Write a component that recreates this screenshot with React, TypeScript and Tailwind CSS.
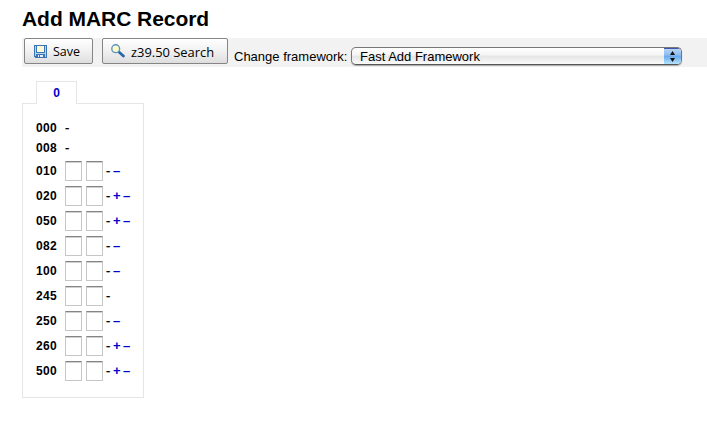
import type { ReactNode } from "react";

type Row = { tag: string; fields: boolean; add: boolean; remove: boolean };

const rows: Row[] = [
  { tag: "000", fields: false, add: false, remove: false },
  { tag: "008", fields: false, add: false, remove: false },
  { tag: "010", fields: true, add: false, remove: true },
  { tag: "020", fields: true, add: true, remove: true },
  { tag: "050", fields: true, add: true, remove: true },
  { tag: "082", fields: true, add: false, remove: true },
  { tag: "100", fields: true, add: false, remove: true },
  { tag: "245", fields: true, add: false, remove: false },
  { tag: "250", fields: true, add: false, remove: true },
  { tag: "260", fields: true, add: true, remove: true },
  { tag: "500", fields: true, add: true, remove: true },
];

function SaveIcon() {
  return (
    <svg width="13" height="13" viewBox="0 0 13 13" shapeRendering="crispEdges">
      <path d="M0 0h13v13H1l-1-1z" fill="#3a74b4" />
      <path d="M1 1h1v10H1zM11 1h1v11h-1z" fill="#b9d5ee" />
      <path d="M3 1h7v6H3z" fill="#fdf9d2" />
      <path d="M1 8h11v1H1z" fill="#b9d5ee" />
      <path d="M4 10h5v2H4z" fill="#e4eef6" />
      <path d="M5 10h1v2H5z" fill="#3a74b4" />
    </svg>
  );
}

function SearchIcon() {
  return (
    <svg width="14" height="14" viewBox="0 0 14 14">
      <path d="M8.2 8.2l4.2 3.8" stroke="#2a69a8" strokeWidth="2.8" strokeLinecap="round" />
      <circle cx="4.7" cy="4.7" r="3.9" fill="#fbfbc4" stroke="#5f94bf" strokeWidth="1.4" />
      <path d="M2.4 4a2.4 2.4 0 0 1 2.2-1.6" stroke="#fff" fill="none" />
    </svg>
  );
}

function ToolButton({ className, children }: { className: string; children: ReactNode }) {
  return (
    <button
      className={`flex h-[26px] shrink-0 items-center rounded-[2px] border border-[#858585] bg-linear-to-b from-white via-[#f1f1f1] to-[#dedede] font-['Open_Sans','Noto_Sans',sans-serif] leading-[18px] text-black ${className}`}
    >
      {children}
    </button>
  );
}

function Field() {
  return (
    <input
      type="text"
      className="h-[20px] w-[17px] border border-[#c6c6c6] border-t-[#858585] bg-white shadow-[inset_0_1px_0_#d0d0d0]"
    />
  );
}

function MarcRow({ row }: { row: Row }) {
  return (
    <div className={`flex items-center ${row.fields ? "h-[25px]" : "h-5"}`}>
      <span className="w-[29px] text-[12px] font-bold tracking-[0.3px]">{row.tag}</span>
      {row.fields && (
        <div className="mr-[3px] flex gap-1 pt-px">
          <Field />
          <Field />
        </div>
      )}
      <div className="flex items-center">
        <span className="w-[7px] text-[13px] [-webkit-text-stroke:0.3px_#000]">-</span>
        {row.add && <a className="w-[10px] text-[13px] font-bold text-[#0000cc]">+</a>}
        {row.remove && <a className="text-[13px] font-bold text-[#0000cc]">–</a>}
      </div>
    </div>
  );
}

export default function App() {
  return (
    <div className="h-[425px] w-[707px] overflow-hidden bg-white pl-[22px] font-['Liberation_Sans',Arial,sans-serif] text-black">
      <h1 className="h-[38px] pt-[6px] text-[21px] leading-[26px] font-bold tracking-[-0.05px]">Add MARC Record</h1>

      <div className="flex h-[29px] items-start bg-[#f2f2f2] pl-[2px]">
        <ToolButton className="mr-[9px] w-[69px] gap-[6px] pl-[9px] text-[12.5px]">
          <SaveIcon />
          <span className="pt-[2px]">Save</span>
        </ToolButton>
        <ToolButton className="mr-[6px] w-[126px] gap-[6px] pl-[8px] text-[12.9px]">
          <SearchIcon />
          <span className="pt-[2px] whitespace-nowrap">z39.50 Search</span>
        </ToolButton>
        <span className="mt-[10px] w-[117px] text-[13px] leading-[18px] whitespace-nowrap">Change framework:</span>
        <div className="mt-[9px] flex h-[18px] w-[331px] overflow-hidden rounded-[5px] border border-[#777] border-b-[#555] bg-[linear-gradient(#fff_0%,#f4f4f4_45%,#e5e5e5_50%,#fafafa_100%)] shadow-[0_1px_1px_#aaa]">
          <span className="flex-1 pl-[8px] text-[13px] leading-[18px]">Fast Add Framework</span>
          <span className="flex w-[17px] items-center justify-center bg-[linear-gradient(#bcd8f5_0%,#8dbcf0_45%,#66a8ea_50%,#b5e4ff_100%)] shadow-[inset_0_1px_0_#4455a8]">
            <svg width="5" height="11" viewBox="0 0 5 11">
              <path d="M2.5 0L5 4H0zM0 7h5l-2.5 4z" fill="#111" />
            </svg>
          </span>
        </div>
      </div>

      <div className="mt-[14px] ml-[14px] flex h-[23px] w-[41px] justify-center">
        <a className="relative z-10 w-full border border-b-0 border-[#e6e6e6] bg-white text-center text-[12px] leading-[22px] font-bold text-[#0000cc]">
          0
        </a>
      </div>
      <div className="-mt-px h-[295px] w-[122px] border border-[#e6e6e6] pt-[14px] pl-[13px]">
        {rows.map((row) => (
          <MarcRow key={row.tag} row={row} />
        ))}
      </div>
    </div>
  );
}
